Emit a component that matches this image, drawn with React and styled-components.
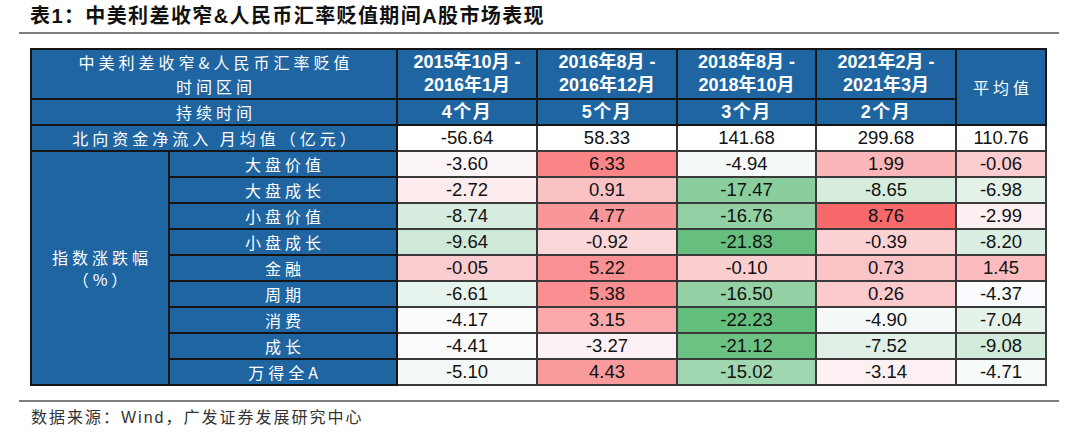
import React from "react";
import styled, { createGlobalStyle } from "styled-components";

const GlobalStyle = createGlobalStyle`
  html, body {
    margin: 0;
    padding: 0;
    background: #fff;
  }
  body {
    width: 1080px;
    height: 432px;
    overflow: hidden;
    font-family: "Liberation Sans", "Noto Sans CJK SC", sans-serif;
  }
`;

const periods = [
  { from: "2015年10月 -", to: "2016年1月", months: "4个月", flow: "-56.64" },
  { from: "2016年8月 -", to: "2016年12月", months: "5个月", flow: "58.33" },
  { from: "2018年8月 -", to: "2018年10月", months: "3个月", flow: "141.68" },
  { from: "2021年2月 -", to: "2021年3月", months: "2个月", flow: "299.68" },
];

const rows = [
  ["大盘价值", "-3.60", "6.33", "-4.94", "1.99", "-0.06"],
  ["大盘成长", "-2.72", "0.91", "-17.47", "-8.65", "-6.98"],
  ["小盘价值", "-8.74", "4.77", "-16.76", "8.76", "-2.99"],
  ["小盘成长", "-9.64", "-0.92", "-21.83", "-0.39", "-8.20"],
  ["金融", "-0.05", "5.22", "-0.10", "0.73", "1.45"],
  ["周期", "-6.61", "5.38", "-16.50", "0.26", "-4.37"],
  ["消费", "-4.17", "3.15", "-22.23", "-4.90", "-7.04"],
  ["成长", "-4.41", "-3.27", "-21.12", "-7.52", "-9.08"],
  ["万得全A", "-5.10", "4.43", "-15.02", "-3.14", "-4.71"],
];

// three-colour scale (green / white / red), midpoint at the median
const all = rows.flatMap((r) => r.slice(1).map(Number)).sort((a, b) => a - b);
const MIN = all[0];
const MAX = all[all.length - 1];
const MID = all[Math.floor(all.length / 2)];
const GREEN = [99, 190, 123];
const WHITE = [252, 252, 255];
const RED = [248, 105, 107];

const mix = (a, b, t) =>
  `rgb(${a.map((c, i) => Math.round(c + (b[i] - c) * t)).join(",")})`;

const scaleColor = (s) => {
  const v = Number(s);
  if (v <= MID) return mix(GREEN, WHITE, (v - MIN) / (MID - MIN));
  return mix(WHITE, RED, (v - MID) / (MAX - MID));
};

const Page = styled.div`
  display: flex;
  flex-direction: column;
  padding: 0 21px 0 19px;
`;

const Title = styled.h1`
  margin: 0;
  height: 32px;
  padding: 2px 0 0 11px;
  box-sizing: border-box;
  font-size: 20px;
  line-height: 28px;
  font-weight: 700;
  letter-spacing: 1.4px;
  color: #111;
`;

const Rule = styled.div`
  height: 2px;
  background: #808080;
`;

const TableArea = styled.div`
  padding: 14px 0 14px 11px;
`;

const Table = styled.table`
  border-collapse: collapse;
  table-layout: fixed;
  width: 1015px;
`;

const Row = styled.tr`
  height: ${(p) => p.$h || 26}px;
`;

const Label = styled.th`
  padding: 0 0 0 4px;
  border: 2px solid #151515;
  background: #1f65a1;
  color: #fff;
  font-family: "Noto Sans CJK SC", sans-serif;
  font-size: 16px;
  font-weight: 400;
  line-height: ${(p) => p.$lh || 22}px;
  letter-spacing: 4px;
  text-align: center;
  vertical-align: middle;
  white-space: nowrap;
`;

const Period = styled.th`
  padding: 0;
  border: 2px solid #151515;
  background: #1f65a1;
  color: #fff;
  font-size: 18px;
  font-weight: 700;
  line-height: 23px;
  letter-spacing: ${(p) => (p.$spaced ? 1.5 : 0)}px;
  text-align: center;
  vertical-align: middle;
  white-space: nowrap;
`;

const Value = styled.td`
  padding: 0;
  border: 2px solid #3a3a3a;
  background: ${(p) => p.$bg || "#fff"};
  color: #111;
  font-size: 18.5px;
  line-height: 22px;
  text-align: center;
  vertical-align: middle;
`;

const Source = styled.p`
  margin: 0;
  padding: 3px 0 0 12px;
  font-family: "Liberation Sans", "Noto Sans CJK SC", sans-serif;
  font-size: 16px;
  line-height: 26px;
  letter-spacing: 2px;
  color: #333;
`;

const widths = [138, 228, 140, 140, 139, 140, 90];

export default function App() {
  return (
    <>
      <GlobalStyle />
      <Page>
        <Title>表1：中美利差收窄&amp;人民币汇率贬值期间A股市场表现</Title>
        <Rule />
        <TableArea>
          <Table>
            <colgroup>
              {widths.map((w, i) => (
                <col key={i} style={{ width: w }} />
              ))}
            </colgroup>
            <tbody>
              <Row $h={49}>
                <Label colSpan={2} $lh={24}>
                  中美利差收窄&amp;人民币汇率贬值
                  <br />
                  时间区间
                </Label>
                {periods.map((p) => (
                  <Period key={p.from}>
                    {p.from}
                    <br />
                    {p.to}
                  </Period>
                ))}
                <Label rowSpan={2}>平均值</Label>
              </Row>
              <Row>
                <Label colSpan={2}>持续时间</Label>
                {periods.map((p) => (
                  <Period key={p.months} $spaced>
                    {p.months}
                  </Period>
                ))}
              </Row>
              <Row>
                <Label colSpan={2}>北向资金净流入 月均值（亿元）</Label>
                {periods.map((p) => (
                  <Value key={p.flow}>{p.flow}</Value>
                ))}
                <Value>110.76</Value>
              </Row>
              {rows.map(([name, ...vals], i) => (
                <Row key={name}>
                  {i === 0 && (
                    <Label rowSpan={rows.length}>
                      指数涨跌幅
                      <br />
                      （%）
                    </Label>
                  )}
                  <Label>{name}</Label>
                  {vals.map((v, j) => (
                    <Value key={j} $bg={scaleColor(v)}>
                      {v}
                    </Value>
                  ))}
                </Row>
              ))}
            </tbody>
          </Table>
        </TableArea>
        <Rule />
        <Source>数据来源：Wind，广发证券发展研究中心</Source>
      </Page>
    </>
  );
}
